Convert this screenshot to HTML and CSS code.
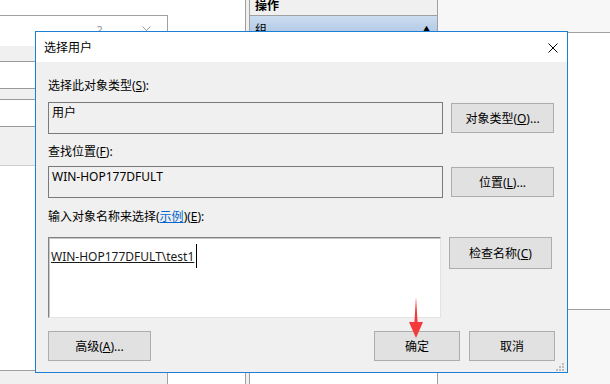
FILE: index.html
```html
<!DOCTYPE html>
<html lang="zh-CN">
<head>
    <meta charset="UTF-8">
    <meta name="viewport" content="width=device-width, initial-scale=1.0">
    <title>选择用户</title>
    <link rel="stylesheet" href="styles.css">
</head>
<body>
    <div class="desk">
        <!-- window behind, left -->
        <div class="col-a">
            <div class="bg-win">
                <div class="bg-title">
                    <span class="bg-help">?</span>
                    <svg class="bg-close" width="9" height="9" viewBox="0 0 9 9">
                        <path d="M0.5 0.5 L8.5 8.5 M8.5 0.5 L0.5 8.5" stroke="#9a9a9a" stroke-width="1" fill="none"/>
                    </svg>
                </div>
                <div class="bg-band"></div>
                <div class="bg-row"></div>
                <div class="bg-gap"></div>
                <div class="bg-row"></div>
                <div class="bg-band tall"></div>
                <div class="bg-rest"></div>
                <div class="bg-foot"></div>
            </div>
        </div>
        <div class="col-b"></div>
        <div class="col-c"></div>

        <!-- actions pane -->
        <div class="col-d">
            <div class="ops-head">操作</div>
            <div class="ops-row">
                <span>组</span>
                <span class="ops-arrow">▲</span>
            </div>
        </div>
        <div class="col-e">
            <div class="e-top"></div>
            <div class="e-mid"></div>
            <div class="e-bot"></div>
        </div>

        <!-- select users dialog -->
        <div class="dialog">
            <div class="dlg-title">
                <span>选择用户</span>
                <svg class="dlg-close" width="10" height="10" viewBox="0 0 10 10">
                    <path d="M0.5 0.5 L9.5 9.5 M9.5 0.5 L0.5 9.5" stroke="#000" stroke-width="1" fill="none"/>
                </svg>
            </div>
            <div class="dlg-body">
                <div class="label first">选择此对象类型(<u>S</u>):</div>
                <div class="row">
                    <div class="field">用户</div>
                    <button class="btn">对象类型(<u>O</u>)...</button>
                </div>

                <div class="label second">查找位置(<u>F</u>):</div>
                <div class="row">
                    <div class="field">WIN-HOP177DFULT</div>
                    <button class="btn">位置(<u>L</u>)...</button>
                </div>

                <div class="label third">输入对象名称来选择(<a href="#" class="link">示例</a>)(<u>E</u>):</div>
                <div class="row top">
                    <div class="names">
                        <span class="typed">WIN-HOP177DFULT\test1</span><span class="caret"></span>
                    </div>
                    <button class="btn tall">检查名称(<u>C</u>)</button>
                </div>

                <div class="actions">
                    <button class="btn">高级(<u>A</u>)...</button>
                    <div class="spacer"></div>
                    <button class="btn small">确定</button>
                    <button class="btn small">取消</button>
                </div>
            </div>
            <svg class="grip" width="8" height="8" viewBox="0 0 8 8">
                <rect x="6" y="0" width="2" height="2" fill="#bdbdbd"/>
                <rect x="3" y="3" width="2" height="2" fill="#bdbdbd"/>
                <rect x="6" y="3" width="2" height="2" fill="#bdbdbd"/>
                <rect x="0" y="6" width="2" height="2" fill="#bdbdbd"/>
                <rect x="3" y="6" width="2" height="2" fill="#bdbdbd"/>
                <rect x="6" y="6" width="2" height="2" fill="#bdbdbd"/>
            </svg>
        </div>

        <!-- red pointer -->
        <svg class="pointer" width="24" height="46" viewBox="0 0 24 46">
            <polygon points="12,2 13.6,27 19,27 12,43 5,27 10.4,27" fill="#f43a3a"/>
        </svg>
    </div>
</body>
</html>
```

FILE: styles.css
```css
/* General reset */
* {
    margin: 0;
    padding: 0;
    box-sizing: border-box;
}

body {
    width: 610px;
    height: 384px;
    overflow: hidden;
    font-family: "Noto Sans", "Noto Sans CJK SC", sans-serif;
    font-size: 12px;
    color: #000;
    background-color: #fff;
}

.desk {
    position: relative;
    width: 610px;
    height: 384px;
    display: grid;
    grid-template-columns: 168px 77px 5px 188px 1fr;
    overflow: hidden;
}

/* Window behind the dialog */
.col-a {
    padding-top: 15px;
    display: flex;
    flex-direction: column;
}

.bg-win {
    flex: 1;
    display: flex;
    flex-direction: column;
    border-top: 1px solid #a0a0a0;
    border-right: 1px solid #a0a0a0;
}

.bg-title {
    height: 30px;
    display: flex;
    align-items: flex-start;
    padding-top: 8px;
    padding-left: 97px;
    gap: 40px;
    color: #9a9a9a;
}

.bg-help {
    line-height: 14px;
}

.bg-close {
    margin-top: 2px;
}

.bg-band {
    height: 15px;
    background-color: #f0f0f0;
}

.bg-band.tall {
    height: 38px;
}

.bg-row {
    height: 28px;
    border-top: 1px solid #9a9a9a;
    border-bottom: 1px solid #9a9a9a;
}

.bg-gap {
    height: 10px;
    background-color: #f0f0f0;
}

.bg-rest {
    flex: 1;
    border-top: 1px solid #d0d0d0;
}

.bg-foot {
    height: 14px;
    background-color: #f0f0f0;
    border-top: 1px solid #a0a0a0;
}

.col-c {
    background-color: #f0f0f0;
    border-left: 1px solid #a0a0a0;
    border-right: 1px solid #a0a0a0;
}

/* Actions pane */
.col-d {
    border-right: 1px solid #a0a0a0;
}

.ops-head {
    height: 16px;
    padding-left: 5px;
    line-height: 12px;
    font-weight: bold;
    background-color: #f0f0f0;
    border-bottom: 1px solid #a0a0a0;
}

.ops-row {
    height: 16px;
    display: flex;
    justify-content: space-between;
    padding: 6px 6px 0 5px;
    line-height: 16px;
    overflow: hidden;
    background: linear-gradient(#cadcf0, #b3cbe6);
}

.ops-arrow {
    font-size: 9px;
}

.col-e {
    display: flex;
    flex-direction: column;
}

.e-top {
    height: 33px;
    background-color: #f7f7f7;
    border-bottom: 1px solid #a0a0a0;
}

.e-mid {
    flex: 1;
}

.e-bot {
    height: 75px;
    background-color: #f7f7f7;
    border-top: 1px solid #a0a0a0;
}

/* Dialog */
.dialog {
    position: absolute;
    left: 35px;
    top: 31px;
    width: 533px;
    height: 342px;
    display: flex;
    flex-direction: column;
    background-color: #f0f0f0;
    border: 1px solid #1c7fd6;
}

.dlg-title {
    height: 30px;
    display: flex;
    align-items: center;
    justify-content: space-between;
    padding: 0 9px 0 8px;
    background-color: #fff;
}

.dlg-close {
    margin-top: 1px;
}

.dlg-body {
    flex: 1;
    display: flex;
    flex-direction: column;
    padding: 16px 12px 11px 12px;
}

.label {
    height: 16px;
    line-height: 16px;
}

.label.second {
    margin-top: 10px;
}

.label.third {
    margin-top: 11px;
}

.link {
    color: #0066cc;
    text-decoration: underline;
}

.row {
    display: flex;
    align-items: center;
    gap: 8px;
    margin-top: 8px;
}

.label.second + .row {
    margin-top: 6px;
}

.row.top {
    align-items: flex-start;
    margin-top: 12px;
}

.field {
    width: 395px;
    height: 32px;
    padding: 2px 3px;
    line-height: 16px;
    border: 1px solid #7a7a7a;
    background-color: #f0f0f0;
}

.names {
    width: 393px;
    height: 81px;
    padding: 6px 2px;
    line-height: 16px;
    background-color: #fff;
    border-top: 1px solid #828282;
    border-left: 1px solid #828282;
    border-right: 1px solid #e3e3e3;
    border-bottom: 1px solid #e3e3e3;
    box-shadow: inset 1px 1px 0 #c8c8c8;
}

.typed {
    color: #1a1a1a;
    text-decoration: underline;
}

.caret {
    display: inline-block;
    width: 1px;
    height: 24px;
    margin-left: 2px;
    vertical-align: -7px;
    background-color: #000;
}

/* Buttons */
.btn {
    width: 103px;
    height: 30px;
    font-family: inherit;
    font-size: 12px;
    color: #000;
    background-color: #e1e1e1;
    border: 1px solid #adadad;
}

.btn.tall {
    height: 32px;
}

.btn.small {
    width: 86px;
}

.actions {
    display: flex;
    gap: 9px;
    margin-top: 13px;
}

.spacer {
    flex: 1;
}

.grip {
    position: absolute;
    right: 3px;
    bottom: 1px;
}

.pointer {
    position: absolute;
    left: 404px;
    top: 295px;
}
```
